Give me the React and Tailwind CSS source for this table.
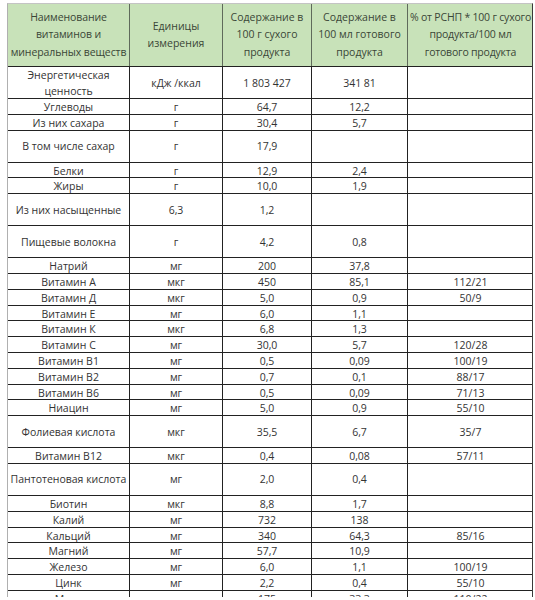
import React from 'react'

const rows = [
  ['Энергетическая\nценность', 'кДж /ккал', '1 803 427', '341 81', '', 2],
  ['Углеводы', 'г', '64,7', '12,2', '', 1],
  ['Из них сахара', 'г', '30,4', '5,7', '', 1],
  ['В том числе сахар', 'г', '17,9', '', '', 2],
  ['Белки', 'г', '12,9', '2,4', '', 1],
  ['Жиры', 'г', '10,0', '1,9', '', 1],
  ['Из них насыщенные', '6,3', '1,2', '', '', 2],
  ['Пищевые волокна', 'г', '4,2', '0,8', '', 2],
  ['Натрий', 'мг', '200', '37,8', '', 1],
  ['Витамин А', 'мкг', '450', '85,1', '112/21', 1],
  ['Витамин Д', 'мкг', '5,0', '0,9', '50/9', 1],
  ['Витамин Е', 'мг', '6,0', '1,1', '', 1],
  ['Витамин К', 'мкг', '6,8', '1,3', '', 1],
  ['Витамин С', 'мг', '30,0', '5,7', '120/28', 1],
  ['Витамин В1', 'мг', '0,5', '0,09', '100/19', 1],
  ['Витамин В2', 'мг', '0,7', '0,1', '88/17', 1],
  ['Витамин В6', 'мг', '0,5', '0,09', '71/13', 1],
  ['Ниацин', 'мг', '5,0', '0,9', '55/10', 1],
  ['Фолиевая кислота', 'мкг', '35,5', '6,7', '35/7', 2],
  ['Витамин В12', 'мкг', '0,4', '0,08', '57/11', 1],
  ['Пантотеновая кислота', 'мг', '2,0', '0,4', '', 2],
  ['Биотин', 'мкг', '8,8', '1,7', '', 1],
  ['Калий', 'мг', '732', '138', '', 1],
  ['Кальций', 'мг', '340', '64,3', '85/16', 1],
  ['Магний', 'мг', '57,7', '10,9', '', 1],
  ['Железо', 'мг', '6,0', '1,1', '100/19', 1],
  ['Цинк', 'мг', '2,2', '0,4', '55/10', 1],
  ['Медь', 'мкг', '175', '33,3', '110/22', 1],
]

const cols = 'grid grid-cols-[122px_93px_89px_96px_125px]'

function Cell({ children, last }) {
  return (
    <div
      className={
        'flex items-center justify-center text-center whitespace-pre-line leading-[16px] ' +
        (last ? '' : 'border-r border-[#222]')
      }
    >
      {children}
    </div>
  )
}

export default function App() {
  return (
    <div className="h-[600px] w-[535px] overflow-hidden bg-white pt-[3px] pl-[7px] font-['Open_Sans',sans-serif] text-[10.5px] text-[#333]">
      <div className="h-[594px] w-[526px] overflow-hidden border-t border-l border-t-[#c4c4c4] border-l-[#b0b0b0] border-r border-r-[#3a3a3a]">
        <div className={cols + ' h-[63px] bg-[#c8e2b9] border-b border-[#222] text-[#3a4637]'}>
          <div className="flex items-center justify-center text-center leading-[17.5px] tracking-[-0.1px] border-r border-[#5f6a5b]">
            Наименование<br />витаминов и<br />минеральных веществ
          </div>
          <div className="flex items-center justify-center text-center leading-[17.5px] border-r border-[#5f6a5b]">
            Единицы<br />измерения
          </div>
          <div className="flex items-center justify-center text-center leading-[17.5px] border-r border-[#5f6a5b]">
            Содержание в<br />100 г сухого<br />продукта
          </div>
          <div className="flex items-center justify-center text-center leading-[17.5px] border-r border-[#5f6a5b]">
            Содержание в<br />100 мл готового<br />продукта
          </div>
          <div className="flex items-center justify-center text-center leading-[17.5px] tracking-[-0.2px]">
            % от РСНП * 100 г сухого<br />продукта/100 мл<br />готового продукта
          </div>
        </div>
        {rows.map((r, i) => (
          <div
            key={i}
            className={cols + ' border-b border-[#222] ' + (r[5] === 2 ? 'h-[32px]' : 'h-[15.8px]')}
          >
            <Cell>{r[0]}</Cell>
            <Cell>{r[1]}</Cell>
            <Cell>{r[2]}</Cell>
            <Cell>{r[3]}</Cell>
            <Cell last>{r[4]}</Cell>
          </div>
        ))}
      </div>
    </div>
  )
}
